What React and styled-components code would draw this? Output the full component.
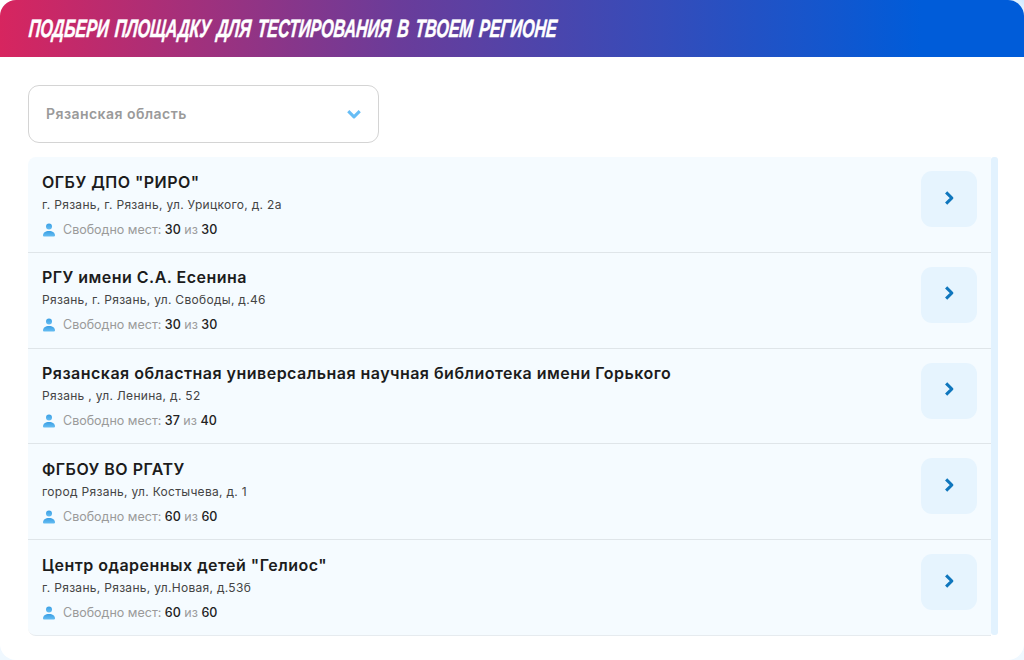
import React from 'react';
import styled, { createGlobalStyle } from 'styled-components';

const places = [
  { name: 'ОГБУ ДПО "РИРО"', address: 'г. Рязань, г. Рязань, ул. Урицкого, д. 2а', free: 30, total: 30 },
  { name: 'РГУ имени С.А. Есенина', address: 'Рязань, г. Рязань, ул. Свободы, д.46', free: 30, total: 30 },
  { name: 'Рязанская областная универсальная научная библиотека имени Горького', address: 'Рязань , ул. Ленина, д. 52', free: 37, total: 40 },
  { name: 'ФГБОУ ВО РГАТУ', address: 'город Рязань, ул. Костычева, д. 1', free: 60, total: 60 },
  { name: 'Центр одаренных детей "Гелиос"', address: 'г. Рязань, Рязань, ул.Новая, д.53б', free: 60, total: 60 },
];

const GlobalStyle = createGlobalStyle`
  html, body {
    margin: 0;
    padding: 0;
    background: #fff;
  }
  * {
    box-sizing: border-box;
  }
`;

const Page = styled.div`
  width: 1024px;
  height: 660px;
  background:
    radial-gradient(circle at 100% 0, #cfe9ff 0, #e6f4ff 10px, transparent 18px),
    linear-gradient(180deg, #fff 50%, #eff8ff 100%);
`;

const Card = styled.div`
  height: 100%;
  background: #fff;
  border-radius: 16px;
  overflow: hidden;
  font-family: Inter, 'Noto Sans', sans-serif;
`;

const Header = styled.div`
  height: 57px;
  padding-left: 29px;
  display: flex;
  align-items: center;
  background: linear-gradient(90deg, #d7255f 0%, #6a3c9a 39%, #005cd9 90%);
  color: #fff;
`;

const Title = styled.h1`
  margin: 0;
  font-family: 'Liberation Sans', sans-serif;
  font-size: 25px;
  font-weight: 700;
  font-style: italic;
  word-spacing: 3px;
  white-space: nowrap;
  transform: skewX(-5deg) scaleX(0.642);
  transform-origin: left center;
  -webkit-text-stroke: 0.5px #fff;
`;

const Body = styled.div`
  padding: 28px 26px 0 28px;
`;

const Select = styled.div`
  width: 351px;
  height: 58px;
  padding: 0 16px 0 17px;
  display: flex;
  align-items: center;
  justify-content: space-between;
  background: #fff;
  border: 1px solid #d4d4d4;
  border-radius: 11px;
`;

const SelectLabel = styled.span`
  margin-top: -2px;
  color: #9a9a9a;
  font-size: 14px;
  font-weight: 600;
  letter-spacing: 0.45px;
`;

const ListWrap = styled.div`
  margin-top: 14px;
  width: 970px;
  height: 478px;
  display: flex;
  justify-content: space-between;
`;

const List = styled.div`
  width: 963px;
  background: #f5fbff;
  border-radius: 8px 0 0 8px;
`;

const ScrollBar = styled.div`
  width: 7px;
  background: #e2f2fe;
  border-radius: 3px;
`;

const Row = styled.div`
  height: 95.75px;
  padding: 14px 14px 0 14px;
  display: flex;
  justify-content: space-between;
  border-bottom: 1px solid #dfe5e9;
  &:last-child {
    border-bottom-left-radius: 8px;
    border-bottom-color: #e6ebef;
  }
`;

const Info = styled.div`
  display: flex;
  flex-direction: column;
`;

const Name = styled.div`
  margin-top: 0.5px;
  font-size: 16px;
  line-height: 20px;
  font-weight: 600;
  letter-spacing: 0.48px;
  color: #1c1c1c;
`;

const Address = styled.div`
  margin-top: 5px;
  font-size: 12px;
  line-height: 16px;
  letter-spacing: 0.3px;
  color: #444;
`;

const Seats = styled.div`
  margin-top: 9px;
  display: flex;
  align-items: center;
  gap: 7px;
  font-size: 12.5px;
  line-height: 16px;
  color: #9a9a9a;
  b {
    font-weight: 500;
    color: #222;
  }
`;

const ArrowButton = styled.div`
  width: 56px;
  height: 56px;
  padding-bottom: 3px;
  display: flex;
  align-items: center;
  justify-content: center;
  background: #e6f4fe;
  border-radius: 11px;
`;

const UserIcon = () => (
  <svg width="14" height="14" viewBox="0 0 14 14">
    <defs>
      <linearGradient id="userFill" x1="0" y1="0" x2="0" y2="1">
        <stop offset="0" stopColor="#3a9fe4" />
        <stop offset="1" stopColor="#66bdf2" />
      </linearGradient>
    </defs>
    <circle cx="7" cy="3.4" r="3" fill="url(#userFill)" />
    <path d="M1 12.6c0-2.9 2.4-4.6 6-4.6s6 1.7 6 4.6c0 .5-.4.9-.9.9H1.9c-.5 0-.9-.4-.9-.9z" fill="url(#userFill)" />
  </svg>
);

const Chevron = ({ color, dir, width, height }) => (
  <svg width={width} height={height} viewBox="0 0 14 14" fill="none">
    <path
      d={dir === 'down' ? 'M2 4.5l5 5 5-5' : 'M4.5 2l5 5-5 5'}
      stroke={color}
      strokeWidth="2.7"
      strokeLinejoin="round"
    />
  </svg>
);

const App = () => (
  <>
    <GlobalStyle />
    <Page>
      <Card>
        <Header>
          <Title>ПОДБЕРИ ПЛОЩАДКУ ДЛЯ ТЕСТИРОВАНИЯ В ТВОЕМ РЕГИОНЕ</Title>
        </Header>
        <Body>
          <Select>
            <SelectLabel>Рязанская область</SelectLabel>
            <Chevron color="#67bdf5" dir="down" width={16} height={16} />
          </Select>
          <ListWrap>
            <List>
              {places.map((p) => (
                <Row key={p.name}>
                  <Info>
                    <Name>{p.name}</Name>
                    <Address>{p.address}</Address>
                    <Seats>
                      <UserIcon />
                      <span>
                        Свободно мест: <b>{p.free}</b> из <b>{p.total}</b>
                      </span>
                    </Seats>
                  </Info>
                  <ArrowButton>
                    <Chevron color="#0f76bd" dir="right" width={16} height={16} />
                  </ArrowButton>
                </Row>
              ))}
            </List>
            <ScrollBar />
          </ListWrap>
        </Body>
      </Card>
    </Page>
  </>
);

export default App;
